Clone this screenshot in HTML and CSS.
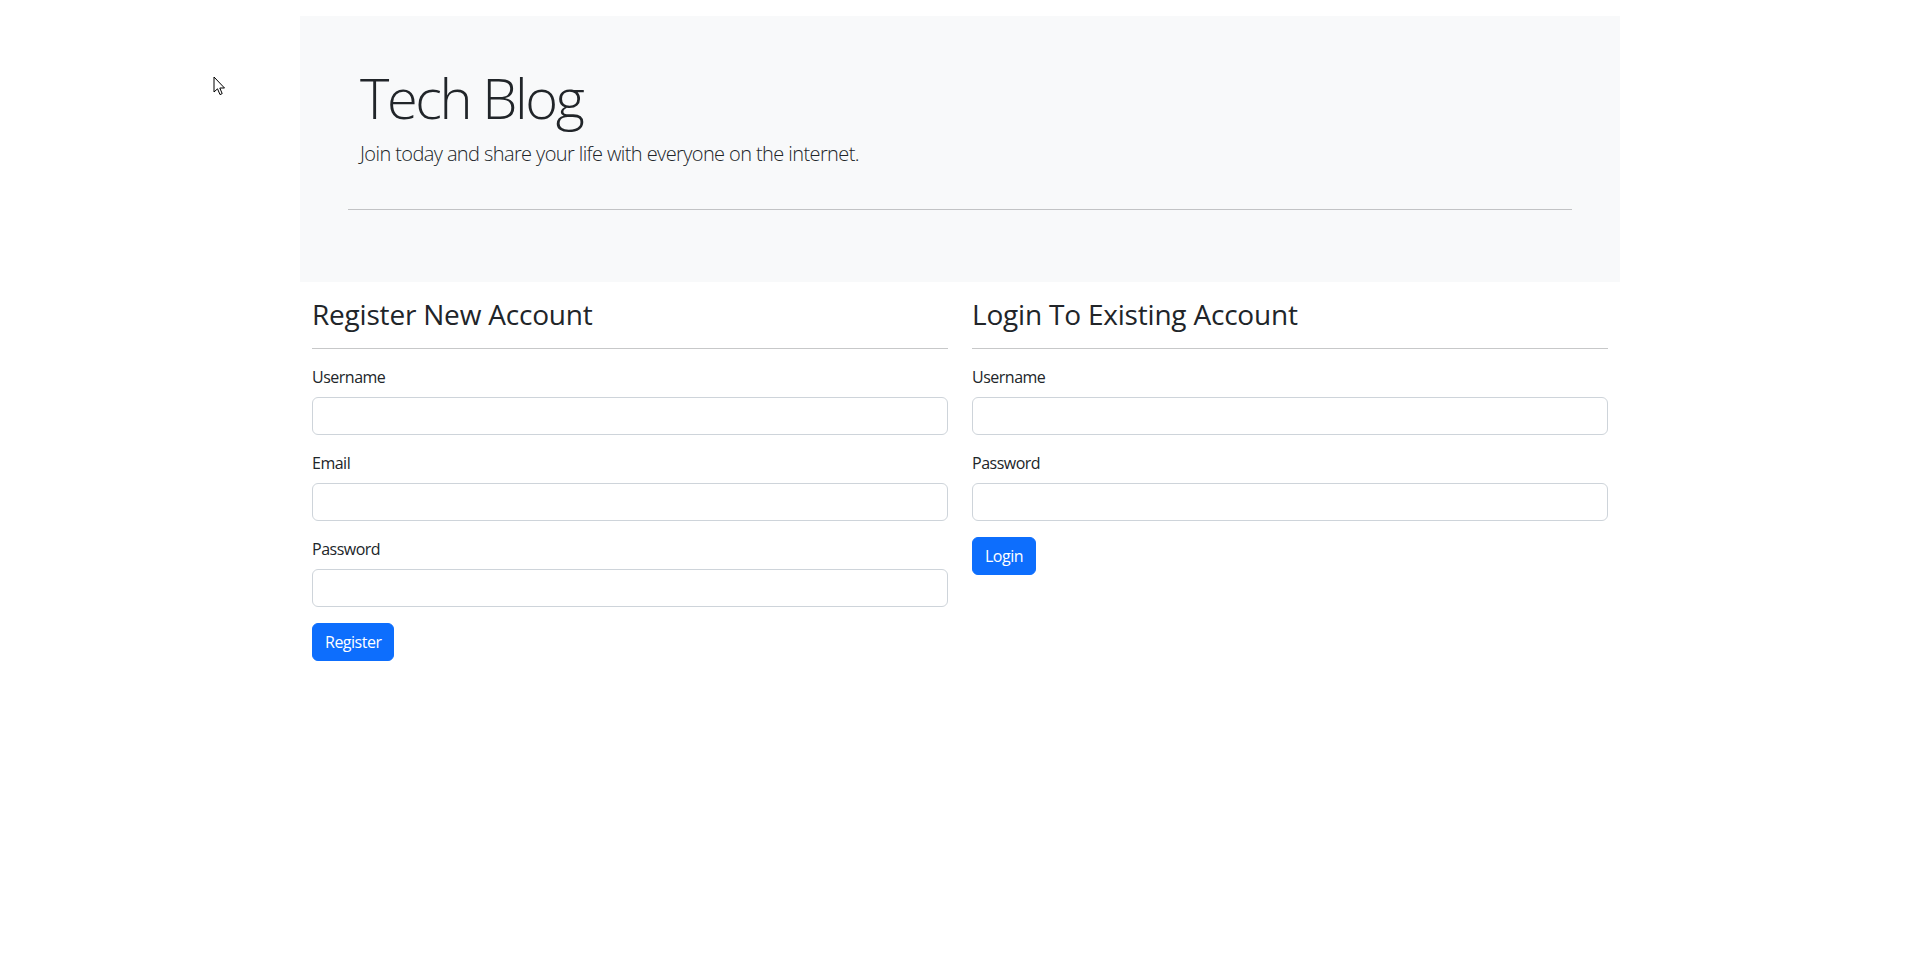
FILE: index.html
```html
<!DOCTYPE html>
<html lang="en">
<head>
<meta charset="utf-8">
<title>Tech Blog</title>
<link rel="stylesheet" href="styles.css">
</head>
<body>
<div class="jumbotron">
  <div class="jumbotron-inner">
    <h1 class="display">Tech Blog</h1>
    <p class="lead">Join today and share your life with everyone on the internet.</p>
  </div>
  <hr class="rule rule-jumbo">
</div>
<div class="container">
  <div class="row">
    <section class="col">
      <h3 class="col-title">Register New Account</h3>
      <hr class="rule">
      <form class="form">
        <div class="field">
          <label class="label">Username</label>
          <input class="input" type="text">
        </div>
        <div class="field">
          <label class="label">Email</label>
          <input class="input" type="email">
        </div>
        <div class="field">
          <label class="label">Password</label>
          <input class="input" type="password">
        </div>
        <button class="btn" type="button">Register</button>
      </form>
    </section>
    <section class="col">
      <h3 class="col-title">Login To Existing Account</h3>
      <hr class="rule">
      <form class="form">
        <div class="field">
          <label class="label">Username</label>
          <input class="input" type="text">
        </div>
        <div class="field">
          <label class="label">Password</label>
          <input class="input" type="password">
        </div>
        <button class="btn" type="button">Login</button>
      </form>
    </section>
  </div>
</div>
<svg class="cursor" width="14" height="21" viewBox="0 0 14 21" xmlns="http://www.w3.org/2000/svg">
  <path d="M1 1 L1 16 L4.5 12.8 L7 18.6 L9.2 17.6 L6.8 12 L11.5 12 Z" fill="#fff" stroke="#000" stroke-width="1" stroke-linejoin="miter"/>
</svg>
</body>
</html>
```

FILE: styles.css
```css
* { box-sizing: border-box; }

html, body {
  margin: 0;
  padding: 0;
  background: #fff;
}

body {
  font-family: "Segoe UI", "Open Sans", "Noto Sans", Arial, sans-serif;
  font-size: 16px;
  line-height: 1.5;
  letter-spacing: -0.5px;
  color: #212529;
  position: relative;
  min-height: 969px;
}

.jumbotron {
  max-width: 1320px;
  margin: 16px auto 0;
  padding: 48px;
  background: #f8f9fa;
}

.jumbotron-inner {
  padding: 0 12px;
}

.display {
  margin: 0 0 8px;
  font-size: 56px;
  font-weight: 300;
  line-height: 1.2;
  letter-spacing: -2.4px;
}

.lead {
  margin: 0 0 16px;
  font-size: 20px;
  font-weight: 300;
  line-height: 1.5;
  letter-spacing: -0.6px;
}

.rule {
  margin: 16px 0;
  border: 0;
  border-top: 1px solid currentColor;
  opacity: 0.25;
  color: inherit;
}

.rule-jumbo {
  margin: 40px 0 24px;
}

.container {
  max-width: 1320px;
  margin: 0 auto;
  padding: 0 12px;
}

.row {
  display: grid;
  grid-template-columns: 1fr 1fr;
  column-gap: 24px;
}

.col {
  padding-top: 16px;
}

.col-title {
  margin: 0;
  font-size: 28px;
  font-weight: 500;
  line-height: 1.2;
  letter-spacing: -0.2px;
}

.field {
  margin-bottom: 16px;
}

.label {
  display: inline-block;
  margin-bottom: 8px;
}

.input {
  display: block;
  width: 100%;
  height: 38px;
  padding: 6px 12px;
  font: inherit;
  color: #212529;
  background: #fff;
  border: 1px solid #ced4da;
  border-radius: 6px;
}

.btn {
  display: inline-block;
  padding: 6px 12px;
  font: inherit;
  line-height: 1.5;
  letter-spacing: -0.5px;
  color: #fff;
  background: #0d6efd;
  border: 1px solid #0d6efd;
  border-radius: 6px;
  cursor: pointer;
}

.cursor {
  position: absolute;
  left: 213px;
  top: 76px;
}
```
